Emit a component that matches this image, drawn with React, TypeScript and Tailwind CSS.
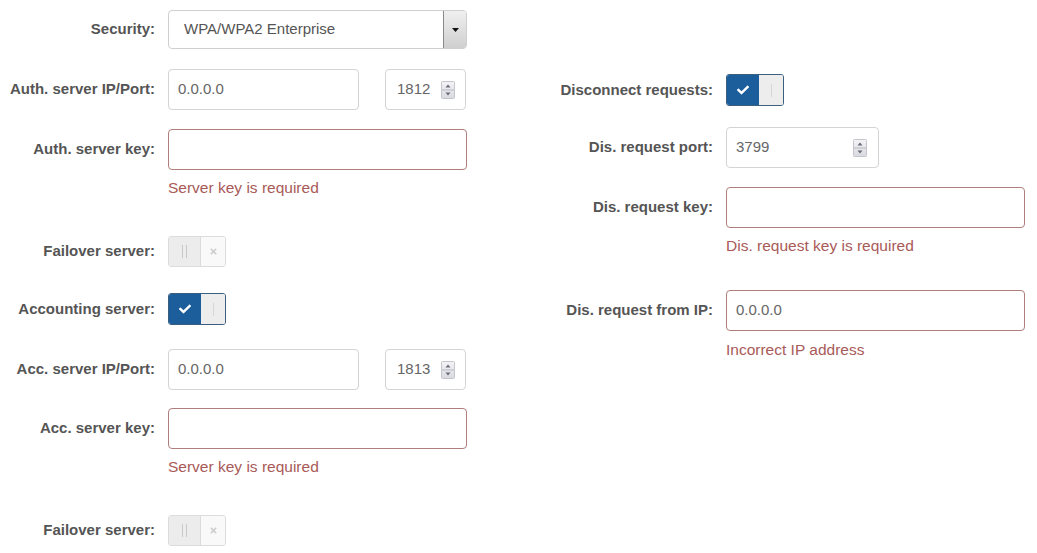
import React from "react";
import { FaCheck, FaTimes } from "react-icons/fa";

const font = { fontFamily: '"Liberation Sans", Arial, sans-serif' };

function Spinner() {
  return (
    <svg width="14" height="18" viewBox="0 0 14 18" className="shrink-0">
      <defs>
        <linearGradient id="sg" x1="0" y1="0" x2="0" y2="1">
          <stop offset="0" stopColor="#f4f4f6" />
          <stop offset="1" stopColor="#d8d8e0" />
        </linearGradient>
      </defs>
      <rect x="0.5" y="0.5" width="13" height="17" rx="1" fill="url(#sg)" stroke="#c4c4cc" />
      <line x1="1" y1="9" x2="13" y2="9" stroke="#b8b8c2" />
      <path d="M7 3.5 L9.5 6.5 L4.5 6.5 Z" fill="#6a6a78" />
      <path d="M7 14.5 L9.5 11.5 L4.5 11.5 Z" fill="#6a6a78" />
    </svg>
  );
}

function Grip({ color = "#c8c8c8" }: { color?: string }) {
  return (
    <div className="flex gap-[3px]">
      <div className="w-px h-[13px]" style={{ background: color }} />
      <div className="w-px h-[13px]" style={{ background: color }} />
    </div>
  );
}

function ToggleOff() {
  return (
    <div className="flex w-[58px] h-[31px] rounded-[3px] border border-[#dcdcdc] overflow-hidden">
      <div className="w-[32px] bg-[#ececec] flex items-center justify-center border-r border-[#dcdcdc]">
        <Grip />
      </div>
      <div className="flex-1 bg-[#f9f9f9] flex items-center justify-center">
        <FaTimes size={9} color="#cfcfcf" />
      </div>
    </div>
  );
}

function ToggleOn() {
  return (
    <div className="flex w-[58px] h-[32px] rounded-[3px] border border-[#3d5f7f] overflow-hidden">
      <div className="w-[32px] bg-[#1c5e9c] flex items-center justify-center">
        <FaCheck size={12} color="#ffffff" />
      </div>
      <div className="flex-1 bg-[#ededed] flex items-center justify-center">
        <div className="w-px h-[13px] bg-[#d6d6d6]" />
      </div>
    </div>
  );
}

function Label({ cls, children }: { cls: string; children: React.ReactNode }) {
  return (
    <div className={`${cls} shrink-0 text-right font-bold text-[15px] text-[#555] pr-[13px]`}>
      {children}
    </div>
  );
}

function TextInput({ cls, value, error }: { cls: string; value?: string; error?: boolean }) {
  return (
    <div
      className={`${cls} h-[41px] rounded-[4px] border bg-white flex items-center px-[9px] text-[15px] text-[#666] ${
        error ? "border-[#b07e7c]" : "border-[#d4d4d4]"
      }`}
    >
      {value}
    </div>
  );
}

function PortInput({ cls, value, textCls }: { cls: string; value: string; textCls: string }) {
  return (
    <div
      className={`${cls} h-[41px] rounded-[4px] border border-[#d4d4d4] bg-white flex items-center text-[15px] text-[#666]`}
    >
      <span className={textCls}>{value}</span>
      <Spinner />
    </div>
  );
}

function ErrorText({ children }: { children: React.ReactNode }) {
  return <div className="h-[18px] leading-[18px] text-[15.5px] text-[#a85a58]">{children}</div>;
}

const L = "w-[168px]";
const R = "w-[246px]";

export default function App() {
  return (
    <div className="w-[1037px] h-[553px] bg-white flex overflow-hidden" style={font}>
      {/* Left column */}
      <div className="w-[480px] flex flex-col pt-[10px]">
        <div className="flex items-center">
          <Label cls={L}>Security:</Label>
          <div className="w-[299px] h-[39px] rounded-[4px] border border-[#cfcfcf] bg-white flex items-center text-[15px] text-[#555] overflow-hidden">
            <span className="flex-1 pl-[15px]">WPA/WPA2 Enterprise</span>
            <div className="w-[23px] h-full border-l border-[#8a8a8a] bg-gradient-to-b from-[#f0f0f0] to-[#cfcfcf] flex items-center justify-center">
              <svg width="7" height="4" viewBox="0 0 7 4">
                <path d="M0 0 L7 0 L3.5 4 Z" fill="#111" />
              </svg>
            </div>
          </div>
        </div>

        <div className="flex items-center mt-[20px]">
          <Label cls={L}>Auth. server IP/Port:</Label>
          <TextInput cls="w-[191px]" value="0.0.0.0" />
          <div className="w-[26px]" />
          <PortInput cls="w-[81px]" value="1812" textCls="pl-[11px] w-[55px]" />
        </div>

        <div className="flex items-center mt-[19px]">
          <Label cls={L}>Auth. server key:</Label>
          <TextInput cls="w-[299px]" error />
        </div>
        <div className="flex mt-[9px]">
          <div className={L} />
          <ErrorText>Server key is required</ErrorText>
        </div>

        <div className="flex items-center mt-[39px]">
          <Label cls={L}>Failover server:</Label>
          <ToggleOff />
        </div>

        <div className="flex items-center mt-[26px]">
          <Label cls={L}>Accounting server:</Label>
          <ToggleOn />
        </div>

        <div className="flex items-center mt-[24px]">
          <Label cls={L}>Acc. server IP/Port:</Label>
          <TextInput cls="w-[191px]" value="0.0.0.0" />
          <div className="w-[26px]" />
          <PortInput cls="w-[81px]" value="1813" textCls="pl-[11px] w-[55px]" />
        </div>

        <div className="flex items-center mt-[18px]">
          <Label cls={L}>Acc. server key:</Label>
          <TextInput cls="w-[299px]" error />
        </div>
        <div className="flex mt-[9px]">
          <div className={L} />
          <ErrorText>Server key is required</ErrorText>
        </div>

        <div className="flex items-center mt-[39px]">
          <Label cls={L}>Failover server:</Label>
          <ToggleOff />
        </div>
      </div>

      {/* Right column */}
      <div className="flex-1 flex flex-col pt-[74px]">
        <div className="flex items-center">
          <Label cls={R}>Disconnect requests:</Label>
          <ToggleOn />
        </div>

        <div className="flex items-center mt-[21px]">
          <Label cls={R}>Dis. request port:</Label>
          <PortInput cls="w-[153px]" value="3799" textCls="pl-[9px] w-[126px]" />
        </div>

        <div className="flex items-center mt-[19px]">
          <Label cls={R}>Dis. request key:</Label>
          <TextInput cls="w-[299px]" error />
        </div>
        <div className="flex mt-[9px]">
          <div className={R} />
          <ErrorText>Dis. request key is required</ErrorText>
        </div>

        <div className="flex items-center mt-[35px]">
          <Label cls={R}>Dis. request from IP:</Label>
          <TextInput cls="w-[299px]" value="0.0.0.0" error />
        </div>
        <div className="flex mt-[10px]">
          <div className={R} />
          <ErrorText>Incorrect IP address</ErrorText>
        </div>
      </div>
    </div>
  );
}
